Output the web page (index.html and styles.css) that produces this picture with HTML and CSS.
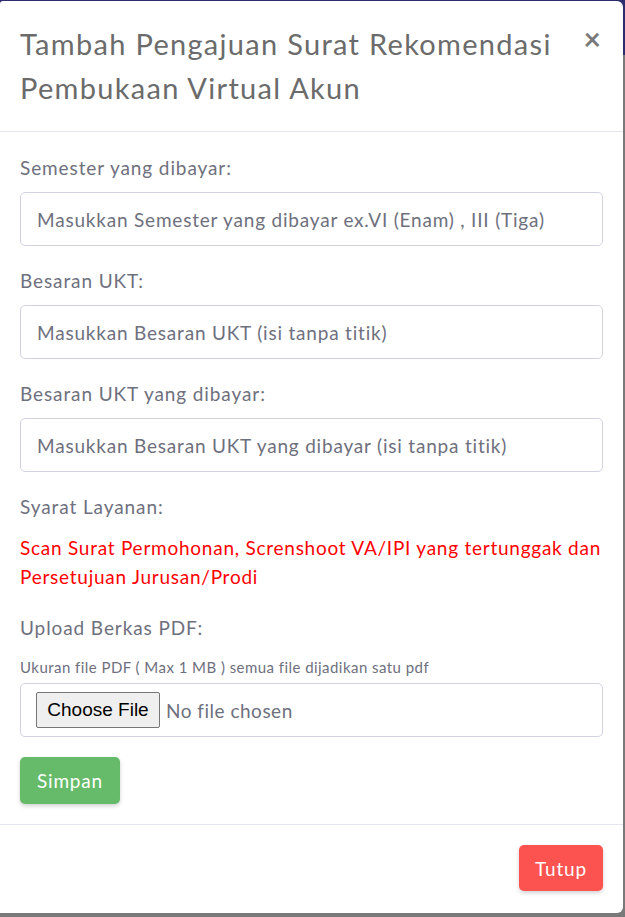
FILE: index.html
```html
<!DOCTYPE html>
<html lang="id">
<head>
<meta charset="utf-8">
<title>Tambah Pengajuan Surat Rekomendasi</title>
<link rel="stylesheet" href="styles.css">
</head>
<body>
<div class="modal">
  <div class="modal-header">
    <h5 class="modal-title">Tambah Pengajuan Surat Rekomendasi Pembukaan Virtual Akun</h5>
    <span class="close">&times;</span>
  </div>
  <div class="modal-body">
    <div class="form-group">
      <label class="label">Semester yang dibayar:</label>
      <input class="form-control" type="text" placeholder="Masukkan Semester yang dibayar ex.VI (Enam) , III (Tiga)">
    </div>
    <div class="form-group">
      <label class="label">Besaran UKT:</label>
      <input class="form-control" type="text" placeholder="Masukkan Besaran UKT (isi tanpa titik)">
    </div>
    <div class="form-group">
      <label class="label">Besaran UKT yang dibayar:</label>
      <input class="form-control" type="text" placeholder="Masukkan Besaran UKT yang dibayar (isi tanpa titik)">
    </div>
    <div class="label label-syarat">Syarat Layanan:</div>
    <p class="syarat">Scan Surat Permohonan, Screnshoot VA/IPI yang tertunggak dan Persetujuan Jurusan/Prodi</p>
    <div class="label label-upload">Upload Berkas PDF:</div>
    <div class="hint">Ukuran file PDF ( Max 1 MB ) semua file dijadikan satu pdf</div>
    <div class="file-box">
      <span class="file-btn">Choose File</span>
      <span class="file-name">No file chosen</span>
    </div>
    <button class="btn btn-success" type="button">Simpan</button>
  </div>
  <div class="modal-footer">
    <button class="btn btn-danger" type="button">Tutup</button>
  </div>
</div>
</body>
</html>
```
FILE: styles.css
```css
html, body {
  margin: 0;
  padding: 0;
}
body {
  width: 625px;
  height: 917px;
  overflow: hidden;
  background: linear-gradient(#2b2d6c 0, #2b2d6c 55px, #797979 55px);
  font-family: "Lato", "Noto Sans", sans-serif;
}
.modal {
  position: relative;
  margin: 1px 2px 0 0;
  width: 623px;
  height: 912px;
  background: #fff;
  border-radius: 3px 6px 6px 0;
  box-sizing: border-box;
  display: flex;
  flex-direction: column;
}
.modal-header {
  display: flex;
  justify-content: space-between;
  align-items: flex-start;
  padding: 21px 20px 21px 20px;
  border-bottom: 1px solid #e3e6f0;
}
.modal-title {
  margin: 0;
  font-size: 29px;
  font-weight: 400;
  letter-spacing: 1.3px;
  line-height: 44px;
  color: #6b6b6b;
  width: 545px;
}
.close {
  font-size: 30px;
  font-weight: 700;
  line-height: 30px;
  color: #7a7a7a;
  margin-top: 1px;
  margin-right: 2px;
}
.modal-body {
  padding: 21px 20px 20px 20px;
  border-bottom: 1px solid #e3e6f0;
}
.form-group {
  margin-bottom: 20px;
}
.label {
  display: block;
  font-size: 19px;
  letter-spacing: 0.9px;
  line-height: 29px;
  color: #6e707e;
  margin-bottom: 10px;
}
.form-control {
  display: block;
  box-sizing: border-box;
  width: 100%;
  height: 54px;
  padding: 0 16px;
  border: 1px solid #d1d3e2;
  border-radius: 5px;
  font-family: inherit;
  font-size: 19px;
  letter-spacing: 0.8px;
  color: #6e707e;
  background: #fff;
}
.form-control::placeholder {
  color: #6e707e;
  opacity: 1;
}
.label-syarat {
  margin-bottom: 12px;
}
.syarat {
  margin: 0 0 22px 0;
  font-size: 19px;
  letter-spacing: 0.75px;
  line-height: 29px;
  color: #ff0000;
}
.label-upload {
  margin-bottom: 15px;
}
.hint {
  font-size: 15px;
  letter-spacing: 0.45px;
  line-height: 21px;
  color: #6e707e;
  margin-bottom: 5px;
}
.file-box {
  box-sizing: border-box;
  height: 54px;
  border: 1px solid #d1d3e2;
  border-radius: 5px;
  padding: 0 15px;
  display: flex;
  align-items: center;
  gap: 6px;
  margin-bottom: 20px;
}
.file-btn {
  box-sizing: border-box;
  height: 36px;
  width: 124px;
  display: flex;
  align-items: center;
  justify-content: center;
  background: #efefef;
  border: 1px solid #767676;
  border-radius: 2px;
  font-family: "Liberation Sans", Arial, sans-serif;
  font-size: 19px;
  color: #000;
}
.file-name {
  font-size: 19px;
  letter-spacing: 0.5px;
  color: #6e707e;
}
.btn {
  display: block;
  border: none;
  border-radius: 5px;
  color: #fff;
  font-family: inherit;
  font-size: 19px;
  letter-spacing: 0.8px;
  box-shadow: 0 2px 4px rgba(0, 0, 0, 0.18);
  padding: 0;
}
.btn-success {
  width: 100px;
  height: 47px;
  background: #66bb6a;
}
.modal-footer {
  display: flex;
  justify-content: flex-end;
  padding: 20px 20px 22px 20px;
}
.btn-danger {
  width: 84px;
  height: 46px;
  background: #fd5350;
}
```
